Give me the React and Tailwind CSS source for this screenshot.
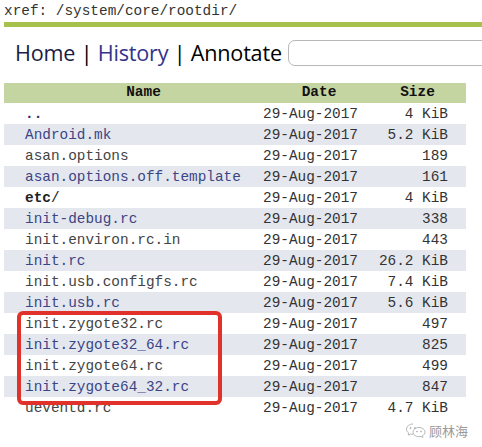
const rows = [
  ["..", "4 KiB", "dir"],
  ["Android.mk", "5.2 KiB"],
  ["asan.options", "189"],
  ["asan.options.off.template", "161"],
  ["etc/", "4 KiB", "bold"],
  ["init-debug.rc", "338"],
  ["init.environ.rc.in", "443"],
  ["init.rc", "26.2 KiB"],
  ["init.usb.configfs.rc", "7.4 KiB"],
  ["init.usb.rc", "5.6 KiB"],
  ["init.zygote32.rc", "497"],
  ["init.zygote32_64.rc", "825"],
  ["init.zygote64.rc", "499"],
  ["init.zygote64_32.rc", "847"],
  ["ueventd.rc", "4.7 KiB"],
];

const mono = { fontFamily: '"Liberation Mono", "DejaVu Sans Mono", monospace' };

function WeChatMark() {
  return (
    <svg width="22" height="16" viewBox="0 0 22 16" fill="none" stroke="#b5b5b5" strokeWidth="1">
      <path d="M8 2c-3.6 0-6.5 2.3-6.5 5.2 0 1.6.9 3 2.3 4l-.6 1.9 2.2-1.1c.8.2 1.7.4 2.6.4" />
      <path d="M14 5.5c-3.3 0-6 2.1-6 4.6s2.7 4.6 6 4.6c.7 0 1.4-.1 2-.3l1.9 1-.5-1.7c1.6-.9 2.6-2.2 2.6-3.6 0-2.5-2.7-4.6-6-4.6z" />
      <circle cx="5.5" cy="6" r=".6" fill="#b5b5b5" />
      <circle cx="10" cy="6" r=".6" fill="#b5b5b5" />
      <circle cx="12" cy="9.5" r=".5" fill="#b5b5b5" />
      <circle cx="16" cy="9.5" r=".5" fill="#b5b5b5" />
    </svg>
  );
}

export default function App() {
  return (
    <div className="relative w-[482px] h-[447px] overflow-hidden bg-white">
      {/* xref path */}
      <div className="h-[22px] pl-1 pt-[1px] text-[14.4px] leading-[20px] text-[#333]" style={mono}>
        xref: /system/core/rootdir/
      </div>
      <div className="ml-1 h-[5px] bg-[#a6c24c]" />

      {/* Nav */}
      <div className="flex items-center h-[40px] mt-[6px] pl-[15px]">
        <div
          className="text-[21.6px] leading-none whitespace-nowrap tracking-[-0.2px]"
          style={{ fontFamily: '"Open Sans", "Noto Sans", sans-serif' }}
        >
          <span className="text-[#1b1d45]">Home</span>
          <span className="text-black"> | </span>
          <span className="text-[#33338a]">History</span>
          <span className="text-black"> | </span>
          <span className="text-black">Annotate</span>
        </div>
        <div className="ml-[6px] shrink-0 w-[220px] h-[26px] rounded-[7px] border border-[#b8b8b8] bg-white" />
      </div>

      {/* Table */}
      <div className="ml-1 w-[462px] mt-[10px] text-[14.4px]" style={mono}>
        <div className="flex h-[20px] items-center bg-[#c5d5a2] font-bold text-[#111]">
          <div className="w-[259px] text-center pl-[20px]">Name</div>
          <div className="w-[112px] text-center">Date</div>
          <div className="flex-1 text-center pr-[6px]">Size</div>
        </div>
        {rows.map(([name, size, kind], i) => {
          const shaded = i % 2 === 1;
          return (
            <div
              key={name}
              className={`flex h-[21px] items-center pt-[2px] ${shaded ? "bg-[#e5e7ef]" : "bg-white"}`}
            >
              <div
                className={`w-[259px] pl-[21px] whitespace-nowrap ${
                  kind === "bold"
                    ? "font-bold text-[#222]"
                    : kind === "dir"
                    ? "font-bold text-[#2a2f5a]"
                    : shaded
                    ? "text-[#3b4585]"
                    : "text-[#444]"
                }`}
              >
                {kind === "bold" ? (
                  <>
                    etc<span className="font-normal">/</span>
                  </>
                ) : (
                  name
                )}
              </div>
              <div className="w-[100px] text-[#333] whitespace-nowrap">29-Aug-2017</div>
              <div className="w-[85px] text-right text-[#333] whitespace-nowrap">{size}</div>
            </div>
          );
        })}
      </div>

      {/* highlight box */}
      <div className="absolute left-[17px] top-[311px] w-[205px] h-[94px] border-[4px] border-[#e0322b] rounded-[6px]" />

      {/* watermark */}
      <div className="absolute left-[405px] top-[422px] flex items-center gap-[2px]">
        <WeChatMark />
        <span
          className="text-[13px] leading-none text-[#9a9a9a]"
          style={{ fontFamily: '"Noto Sans CJK SC", sans-serif' }}
        >
          顾林海
        </span>
      </div>
    </div>
  );
}
